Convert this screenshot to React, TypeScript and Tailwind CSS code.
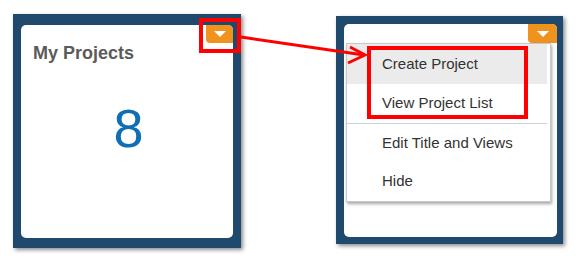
import React from "react";

function Caret() {
  return (
    <svg width="12" height="6" viewBox="0 0 12 6">
      <path d="M0 0 L12 0 L6 6 Z" fill="#fff" />
    </svg>
  );
}

function MenuItem({ label, active }: { label: string; active?: boolean }) {
  return (
    <div
      className={`h-[38px] flex items-center pl-[35px] text-[15px] text-[#333] ${
        active ? "bg-[#ebebeb] h-[40px] mr-[3px]" : ""
      }`}
    >
      {label}
    </div>
  );
}

export default function App() {
  return (
    <div className="relative w-[578px] h-[260px] bg-white overflow-hidden font-['Liberation_Sans',Arial,sans-serif]">
      <div className="flex items-start pl-[13px] pt-[14px] gap-[95px]">
        {/* tile, closed */}
        <div className="w-[228px] h-[234px] bg-[#1f4a6e] pt-[11px] px-[8px] pb-[10px] shadow-[2px_2px_4px_rgba(0,0,0,0.45)]">
          <div className="relative h-full bg-white rounded-[5px] flex flex-col items-start pl-[12px] pt-[19px]">
            <div className="absolute top-0 right-0 w-[27px] h-[18px] bg-[#f0921e] rounded-tr-[5px] rounded-bl-[4px] flex items-center justify-center">
              <Caret />
            </div>
            <h2 className="text-[18px] leading-none font-bold text-[#5b5b5b]">My Projects</h2>
            <div className="self-center -ml-[9px] mt-[39px] text-[54px] leading-none text-[#0f6fb5]">8</div>
          </div>
        </div>

        {/* tile, menu open */}
        <div className="mt-[2px] w-[227px] h-[228px] bg-[#1f4a6e] pt-[8px] pl-[8px] pr-[6px] pb-[7px] shadow-[2px_2px_4px_rgba(0,0,0,0.45)]">
          <div className="relative h-full bg-white rounded-[5px]">
            <div className="absolute top-0 right-0 w-[29px] h-[19px] bg-[#f0921e] rounded-tr-[5px] rounded-bl-[4px] flex items-center justify-center">
              <Caret />
            </div>
            <div className="absolute top-[19px] left-[2px] w-[205px] h-[159px] bg-white border border-[#c8c8c8] shadow-[1px_2px_3px_rgba(0,0,0,0.35)]">
              <MenuItem label="Create Project" active />
              <MenuItem label="View Project List" />
              <div className="h-px bg-[#c9d4df] mt-[1px] mr-[3px]" />
              <MenuItem label="Edit Title and Views" />
              <MenuItem label="Hide" />
            </div>
          </div>
        </div>
      </div>

      {/* annotations */}
      <div className="absolute left-[199px] top-[18px] w-[42px] h-[35px] border-[4px] border-[#ff0000]" />
      <div className="absolute left-[367px] top-[46px] w-[161px] h-[73px] border-[4px] border-[#ff0000]" />
      <svg className="absolute inset-0" width="578" height="260">
        <line x1="241" y1="37" x2="364" y2="55" stroke="#ff0000" strokeWidth="3" />
        <polyline points="350,47 365,55 348,63" fill="none" stroke="#ff0000" strokeWidth="3" />
      </svg>
    </div>
  );
}
